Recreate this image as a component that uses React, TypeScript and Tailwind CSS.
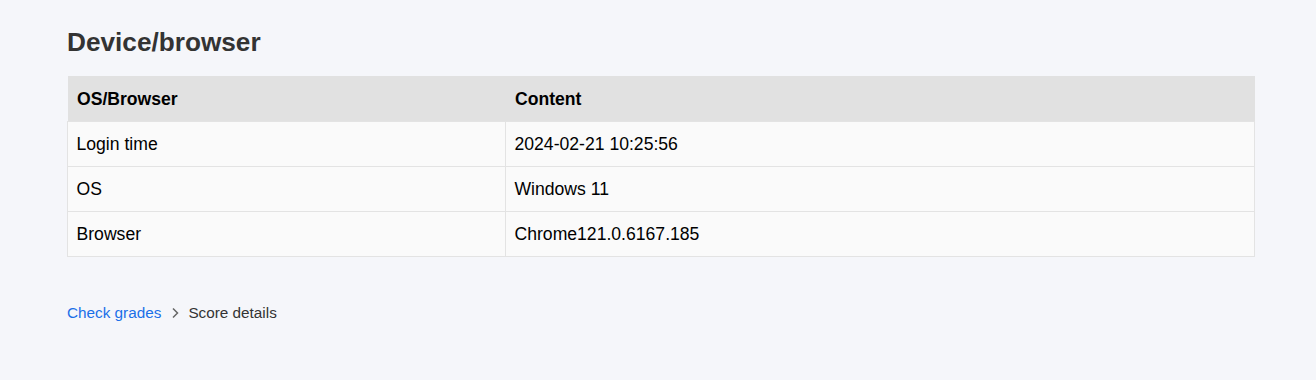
import { type FC } from "react";

const rows = [
  { label: "Login time", value: "2024-02-21 10:25:56" },
  { label: "OS", value: "Windows 11" },
  { label: "Browser", value: "Chrome121.0.6167.185" },
];

const App: FC = () => {
  return (
    <div className="min-h-screen bg-[#f5f6fa] font-['Liberation_Sans',Arial,sans-serif]">
      <div className="ml-[67px] w-[1188px] pt-[27px]">
        <h2 className="text-[26.2px] font-bold leading-[30px] text-[#333]">
          Device/browser
        </h2>

        <table className="mt-[19px] w-full border-collapse text-[17.6px] text-black">
          <thead>
            <tr className="h-[45px] bg-[#e1e1e1]">
              <th className="w-[438px] px-[9.5px] pt-[2px] text-left font-bold">
                OS/Browser
              </th>
              <th className="px-[9.5px] pt-[2px] text-left font-bold">
                Content
              </th>
            </tr>
          </thead>
          <tbody>
            {rows.map((row) => (
              <tr key={row.label} className="h-[45px] bg-[#fafafa]">
                <td className="border border-[#e3e3e3] px-[8.5px] pt-[2px]">
                  {row.label}
                </td>
                <td className="border border-[#e3e3e3] px-[8.5px] pt-[2px]">
                  {row.value}
                </td>
              </tr>
            ))}
          </tbody>
        </table>

        {/* パンくず */}
        <nav className="mt-[45px] flex items-center text-[15.3px]">
          <a href="#" className="text-[#1a6fe8]">
            Check grades
          </a>
          <svg
            className="ml-[8px] mr-[7px] h-[12px] w-[12px] text-[#666]"
            viewBox="0 0 12 12"
            fill="none"
            stroke="currentColor"
            strokeWidth="1.5"
          >
            <path d="M4 1.5 8.5 6 4 10.5" />
          </svg>
          <span className="text-[#333]">Score details</span>
        </nav>
      </div>
    </div>
  );
};

export default App;
